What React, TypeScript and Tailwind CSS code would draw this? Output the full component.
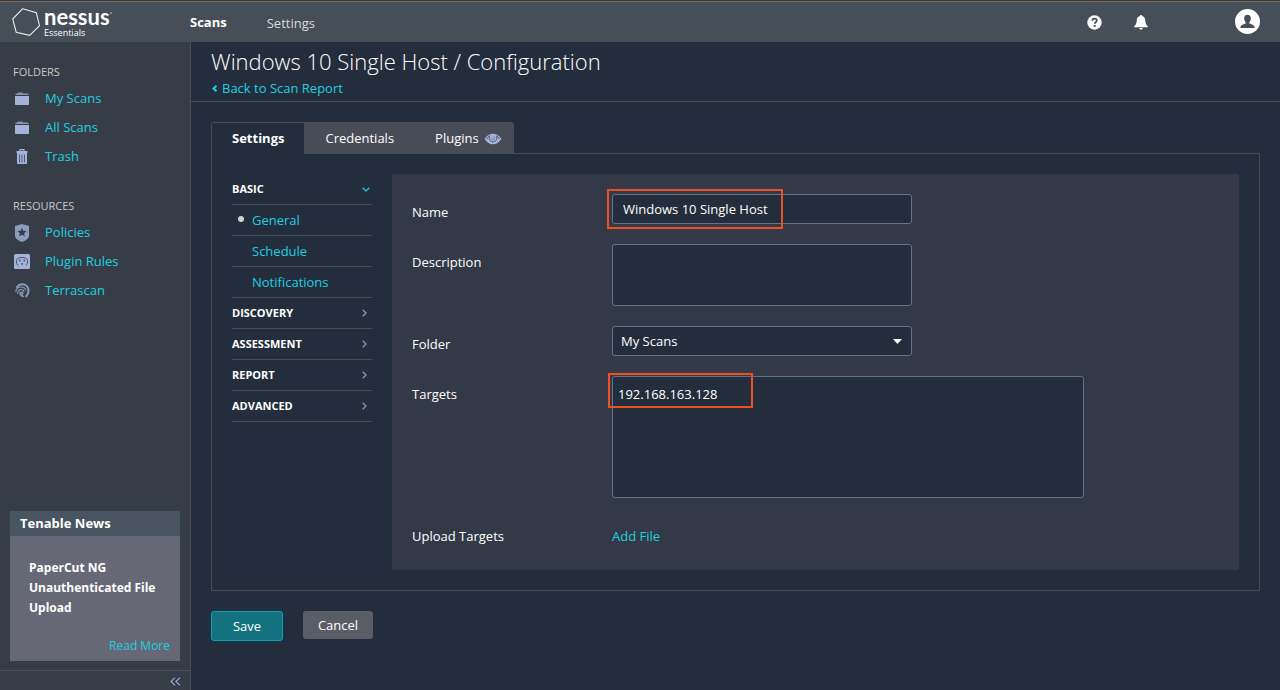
import { useState } from "react";
import type { ReactNode } from "react";

const FolderIcon = () => (
  <svg viewBox="0 0 14 13" className="h-[13px] w-[14px]" fill="#a2b2d8" aria-hidden="true">
    <path d="M.5 3V1.500h2L3 .5h4.500l.5 1h5l.5.5v1z" opacity=".75" />
    <path d="M0 4h14v8.400l-.6.6H.6L0 12.400z" />
  </svg>
);

const TrashIcon = () => (
  <svg viewBox="0 0 12 15" className="h-[15px] w-[12px]" aria-hidden="true">
    <path d="M4 2V.6h4V2" fill="none" stroke="#a2b2d8" strokeWidth="1.2" />
    <path d="M.5 2h11v2H.5zM1 4h10v10.400l-.6.6H1.600L1 14.400z" fill="#a2b2d8" />
    <path d="M3.500 5.500v8M6 5.500v8M8.500 5.500v8" stroke="#4f5878" strokeWidth="1" />
  </svg>
);

const PolicyIcon = () => (
  <svg viewBox="0 0 14 18" className="h-[18px] w-[14px]" aria-hidden="true">
    <path d="M7 0l7 2v9.500c0 3-3 5-7 6.500-4-1.500-7-3.500-7-6.500V2z" fill="#8d9bbd" />
    <path d="M7 3.700l1.300 3.100 3.300.2-2.500 2.200.8 3.200L7 10.700l-2.900 1.700.8-3.200L2.400 7l3.300-.2z" fill="#373d47" />
  </svg>
);

const RulesIcon = () => (
  <svg viewBox="0 0 16 15" className="h-[15px] w-[16px]" aria-hidden="true">
    <rect width="16" height="15" rx="1.500" fill="#a2b2d8" />
    <g fill="none" stroke="#4c5879" strokeWidth="1">
      <path d="M4.200 11.500C2 9.500 1.800 6.500 3.500 4.500 5.500 3 10.500 3 12.500 4.500c1.700 2 1.500 5-.7 7" />
    </g>
    <path d="M5 5.500h1.500v2H5zM9.500 5.500H11v2H9.500zM7.200 9h1.600v1.800H7.200z" fill="#4c5879" />
  </svg>
);

const TerrascanIcon = () => (
  <svg viewBox="0 0 16 15" className="h-[15px] w-[16px]" fill="none" stroke="#8d9bbd" strokeLinecap="round" aria-hidden="true">
    <path d="M3 4C4.300 2.300 6 1.300 8 1.300c4 0 6.500 2.700 6.500 6.200 0 2.500-.8 4.300-2.300 5.800" strokeWidth="2" />
    <path d="M1.800 8.500C2.200 5.700 4.500 4 7.500 4c2.300 0 3.900 1.200 4.200 3" strokeWidth="1.200" />
    <path d="M3.700 10.500C3.500 8.300 5.300 6.500 7.400 6.500c1.400 0 2.300.7 2.500 1.800" strokeWidth="1.200" />
    <path d="M6.200 9.500c-.1 1.700 1 3 2.800 3.900M8 9l.8 1.700" strokeWidth="1.700" />
  </svg>
);

const EyeIcon = () => (
  <svg viewBox="0 0 18 12" className="h-[12px] w-[18px]" aria-hidden="true">
    <path d="M.5 6c2.500-3.600 5.200-5.200 8.500-5.200S15 2.400 17.500 6c-2.500 3.600-5.200 5.200-8.500 5.200S3 9.600.5 6z" fill="#a2b2d8" />
    <path d="M2.500 6C3.500 4.400 4.400 3.400 5.500 2.900 4.500 5.600 6 8.800 9 8.800s4.500-3.200 3.500-5.900c1.100.5 2 1.500 3 3.100" fill="none" stroke="#4a5066" strokeWidth=".9" />
    <circle cx="9" cy="5" r="2" fill="#7c88ab" />
    <circle cx="8.500" cy="4.400" r="1.300" fill="#a2b2d8" />
  </svg>
);

const Chevron = ({ open }: { open: boolean }) =>
  open ? (
    <svg viewBox="0 0 8 5" className="-mr-px h-[5px] w-[8px]" fill="none" stroke="#1bc4d4" strokeWidth="1.300" aria-hidden="true">
      <path d="M.7.700L4 4 7.300.700" />
    </svg>
  ) : (
    <svg viewBox="0 0 5 8" className="mr-0.5 h-[8px] w-[5px]" fill="none" stroke="#8296c4" strokeWidth="1.300" aria-hidden="true">
      <path d="M.7.700L4 4 .7 7.300" />
    </svg>
  );

function SideGroup({ title, items }: { title: string; items: [string, ReactNode][] }) {
  return (
    <section>
      <h2 className="pl-[13px] text-[11px] leading-5 text-[#c8c8c8]">{title}</h2>
      <ul className="pt-0.5">
        {items.map(([label, icon]) => (
          <li key={label}>
            <a href="#" className="flex h-[29px] items-center text-[13px] text-[#1fcfe0]">
              <span className="flex w-[45px] justify-center pr-px">{icon}</span>
              {label}
            </a>
          </li>
        ))}
      </ul>
    </section>
  );
}

function Row({ id, label, children }: { id: string; label: string; children: ReactNode }) {
  return (
    <div className="flex items-start">
      <label htmlFor={id} className="w-[200px] shrink-0 pt-2 leading-5">
        {label}
      </label>
      {children}
    </div>
  );
}

const field = "block rounded-[3px] border border-[#64728a] bg-[#242d3c] text-[13px] text-white outline-none";

export default function App() {
  const [name, setName] = useState("Windows 10 Single Host");
  const [description, setDescription] = useState("");
  const [targets, setTargets] = useState("192.168.163.128");

  return (
    <div className="flex min-h-screen flex-col bg-[#242d3c] font-['Open_Sans',sans-serif] text-[13px] text-white">
      <header className="flex h-[42px] shrink-0 items-center border-t border-[#3b3534] bg-[#464e57] pt-px shadow-[inset_0_1px_0_#706b6b]">
        <a href="#" className="flex w-[190px] items-center pl-3" aria-label="Nessus Essentials">
          <svg viewBox="0 0 28 28" className="size-7" fill="none" stroke="#e8eaec" strokeWidth="1.100" aria-hidden="true">
            <path d="M10.800.700L24.300 4.800l3.200 12.900L17.700 27.300 4.200 24.200.700 11z" />
          </svg>
          <span className="ml-1 flex flex-col">
            <span className="flex font-[Lato,sans-serif] text-[22px] leading-[22px] font-bold">
              nessus<span className="mt-1.5 size-0.5 rounded-full bg-[#9a9fa5]" />
            </span>
            <span className="text-[9px] leading-[10px]">Essentials</span>
          </span>
        </a>
        <nav className="flex items-center gap-10">
          <a href="#" className="pt-px font-bold">Scans</a>
          <a href="#" className="pt-[3px] text-[#d9dbde]">Settings</a>
        </nav>
        <div className="ml-auto flex items-center pr-5">
          <button type="button" aria-label="Help" className="mr-8">
            <svg viewBox="0 0 15 15" className="size-[15px]" aria-hidden="true">
              <circle cx="7.500" cy="7.500" r="7.200" fill="#fff" />
              <path d="M5.300 5.700C5.300 4.300 6.200 3.600 7.500 3.600s2.300.8 2.300 2c0 1.600-2.100 1.600-2.100 3.200" fill="none" stroke="#464e57" strokeWidth="1.700" />
              <path d="M6.800 10h1.900v1.900H6.800z" fill="#464e57" />
            </svg>
          </button>
          <button type="button" aria-label="Notifications" className="mr-[86px]">
            <svg viewBox="0 0 14 15" className="h-[15px] w-[14px]" fill="#fff" aria-hidden="true">
              <path d="M6.300 0h1.400l.3 1c2 .5 3 2 3.200 4 .3 3 .4 4.500 2.600 6.200v1H.2v-1C2.400 9.500 2.500 8 2.800 5 3 3 4 1.500 6 1zM5.300 13h3.400c-.2 1-.8 1.500-1.700 1.500S5.500 14 5.300 13z" />
            </svg>
          </button>
          <button type="button" aria-label="Account">
            <svg viewBox="0 0 26 26" className="size-[26px]" aria-hidden="true">
              <circle cx="13.500" cy="12.500" r="12.500" fill="#fff" />
              <path d="M13.500 5.700c2.200 0 3.300 1.400 3.300 3.600 0 1.700-.6 3.100-1.500 4v1.300c2.200.8 4.500 1.500 5.200 2.800V19h-14v-1.600c.7-1.300 3-2 5.200-2.800v-1.300c-.9-.9-1.500-2.300-1.500-4 0-2.200 1.100-3.600 3.300-3.600z" fill="#464e57" />
            </svg>
          </button>
        </div>
      </header>

      <div className="flex grow">
        <aside className="flex w-[191px] shrink-0 flex-col border-r border-[#4b505a] bg-[#373d47]">
          <div className="flex flex-col gap-[25px] pt-5">
            <SideGroup title="FOLDERS" items={[["My Scans", <FolderIcon />], ["All Scans", <FolderIcon />], ["Trash", <TrashIcon />]]} />
            <SideGroup title="RESOURCES" items={[["Policies", <PolicyIcon />], ["Plugin Rules", <RulesIcon />], ["Terrascan", <TerrascanIcon />]]} />
          </div>
          <section className="mx-2.5 mt-auto mb-[9px] bg-[#666975]">
            <h2 className="bg-[#485460] px-2.5 text-[13px] leading-[25px] font-bold">Tenable News</h2>
            <div className="flex flex-col px-2.5 pt-[22px] pb-[5px]">
              <p className="pl-[9px] text-xs leading-5 font-bold">PaperCut NG Unauthenticated File Upload</p>
              <a href="#" className="mt-[18px] self-end text-xs leading-5 text-[#1fcfe0]">Read More</a>
            </div>
          </section>
          <div className="flex h-5 items-end justify-end border-t border-[#4b505a] pr-[9px] pb-1">
            <button type="button" aria-label="Collapse sidebar">
              <svg viewBox="0 0 11 9" className="h-[9px] w-[11px]" fill="none" stroke="#8fa3d4" strokeWidth="1.300" aria-hidden="true">
                <path d="M5 .6L1 4.500l4 3.900M10 .6L6 4.500l4 3.900" />
              </svg>
            </button>
          </div>
        </aside>

        <main className="min-w-0 grow">
          <div className="h-[60px] border-b border-[#474d59] pl-5">
            <h1 className="pt-[3px] text-[22px] leading-8 font-light">Windows 10 Single Host / Configuration</h1>
            <a href="#" className="flex items-center gap-1 pt-px leading-5 text-[#1fcfe0]">
              <svg viewBox="0 0 7 7" className="size-[7px]" fill="none" stroke="#1fcfe0" strokeWidth="2" aria-hidden="true">
                <path d="M5.500.800L2.500 3.500l3 2.700" />
              </svg>
              Back to Scan Report
            </a>
          </div>

          <div className="px-5 pt-5">
            <div role="tablist" className="relative z-10 -mb-px flex h-8 w-fit overflow-hidden rounded-t-[3px] border-x border-t border-[#474d59]">
              <button type="button" role="tab" aria-selected="true" className="bg-[#242d3c] px-5 font-bold">Settings</button>
              <button type="button" role="tab" aria-selected="false" className="bg-[#484c57] px-[21px]">Credentials</button>
              <button type="button" role="tab" aria-selected="false" className="flex items-center gap-[5px] bg-[#484c57] pr-[11px] pl-5">
                Plugins <EyeIcon />
              </button>
            </div>

            <div className="flex gap-5 border border-[#474d59] p-5">
              <nav className="w-[140px] shrink-0">
                <ul>
                  {["BASIC", "General", "Schedule", "Notifications", "DISCOVERY", "ASSESSMENT", "REPORT", "ADVANCED"].map((item) => {
                    const group = item === item.toUpperCase();
                    return (
                      <li key={item} className="h-[31px] border-b border-[#474d59]">
                        {group ? (
                          <button type="button" className="flex h-full w-full items-center justify-between pr-[3px] text-[11px] font-bold">
                            {item}
                            <Chevron open={item === "BASIC"} />
                          </button>
                        ) : (
                          <a href="#" className="flex h-full items-center pt-0.5 text-[#1fcfe0]">
                            <span className="w-5 pb-1 pl-1.5">
                              {item === "General" && <span className="block size-1.5 rounded-full bg-[#d0d0d0]" />}
                            </span>
                            {item}
                          </a>
                        )}
                      </li>
                    );
                  })}
                </ul>
              </nav>

              <form className="flex min-w-0 grow flex-col gap-5 bg-[#333946] px-5 pt-5 pb-6">
                <Row id="name" label="Name">
                  <div className="relative">
                    <input id="name" value={name} onChange={(e) => setName(e.target.value)} className={`${field} h-[30px] w-[300px] px-2.5`} />
                    <span className="pointer-events-none absolute -top-[5px] -left-[5px] h-10 w-44 border-2 border-[#f04f23]" />
                  </div>
                </Row>
                <Row id="description" label="Description">
                  <textarea id="description" value={description} onChange={(e) => setDescription(e.target.value)} className={`${field} h-[62px] w-[300px] resize-none p-2`} />
                </Row>
                <Row id="folder" label="Folder">
                  <div className="relative">
                    <select id="folder" className={`${field} h-[30px] w-[300px] appearance-none px-2 pt-0.5`}>
                      <option>My Scans</option>
                    </select>
                    <svg viewBox="0 0 9 5" className="pointer-events-none absolute top-[13px] right-2.5 h-[5px] w-[9px]" fill="#fff" aria-hidden="true">
                      <path d="M0 0h9L4.500 5z" />
                    </svg>
                  </div>
                </Row>
                <Row id="targets" label="Targets">
                  <div className="relative">
                    <textarea id="targets" value={targets} onChange={(e) => setTargets(e.target.value)} className={`${field} h-[122px] w-[472px] resize-none px-[5px] py-[7px] leading-5`} />
                    <span className="pointer-events-none absolute -top-[3px] -left-1 h-[35px] w-[145px] border-2 border-[#f04f23]" />
                  </div>
                </Row>
                <Row id="upload" label="Upload Targets">
                  <button id="upload" type="button" className="pt-2 leading-5 text-[#1fcfe0]">Add File</button>
                </Row>
              </form>
            </div>

            <div className="flex items-start gap-5 py-5">
              <button type="button" className="h-[30px] w-[72px] rounded-[3px] border border-[#04a5b5] bg-[#137180] pt-0.5">Save</button>
              <button type="button" className="h-7 w-[70px] rounded-[3px] bg-[#5a5c66] pt-0.5">Cancel</button>
            </div>
          </div>
        </main>
      </div>
    </div>
  );
}
